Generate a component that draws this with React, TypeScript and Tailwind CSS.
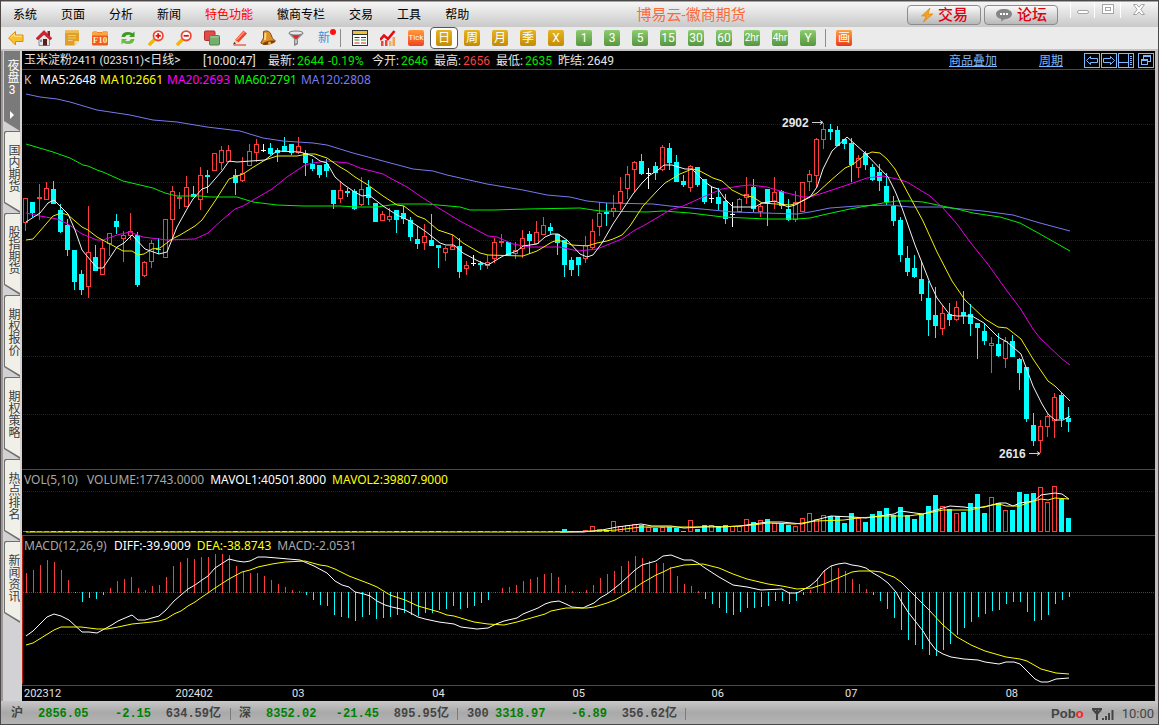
import type { ReactNode } from "react";
import clsx from "clsx";

const FIRST_X = 23;
const STEP = 7;

// kind (u = up, d = down, w = unchanged), high, body top, body bottom, low
const CANDLES = `
u 198 198 223 231|d 202 202 213 217|u 184 197 199 220|u 182 188 200 200|d 181 189 204 204
d 204 210 232 233|d 219 225 250 256|d 250 250 282 290|d 270 274 290 295|u 206 252 287 298
d 245 257 271 271|u 240 248 275 275|u 233 233 244 256|d 214 221 227 234|u 231 235 239 262
u 213 231 236 240|d 232 235 285 287|u 261 262 276 277|u 240 243 262 268|d 238 249 250 254
u 219 219 258 258|u 186 191 220 240|u 192 197 199 209|u 176 187 207 207|d 186 194 197 197
u 167 175 200 210|d 170 175 177 193|u 153 153 171 171|u 146 150 163 170|u 145 150 162 162
d 169 175 183 195|u 157 173 181 182|u 144 151 166 166|u 139 144 153 162|w 144 150 151 152
d 143 148 154 155|d 148 150 153 162|d 137 146 152 152|d 144 144 153 155|u 137 146 153 154
d 150 153 163 176|d 159 164 169 171|d 165 165 175 178|d 159 164 171 177|d 190 190 204 209
u 181 190 199 203|d 188 191 193 197|d 189 191 209 210|u 177 189 205 206|d 180 187 198 205
d 203 203 222 222|u 211 214 221 221|u 208 216 220 222|d 210 210 220 233|d 206 213 219 224
d 217 220 237 241|d 226 239 244 249|u 224 236 243 250|d 214 240 246 246|d 245 245 248 268
u 246 248 253 261|u 235 246 250 250|d 238 246 272 278|u 261 265 269 275|w 255 263 264 266
d 261 263 265 270|u 255 262 266 269|u 238 242 259 263|u 234 241 243 247|d 242 242 255 255
u 242 250 254 259|u 230 238 249 258|d 231 234 241 254|u 221 232 244 244|u 217 225 235 235
d 223 227 231 234|d 234 234 243 255|d 240 240 265 277|d 257 260 270 276|d 257 257 265 276
u 236 245 259 263|u 219 231 248 250|u 202 213 227 236|d 203 212 214 226|u 195 208 212 217
u 177 191 203 210|u 166 174 189 199|u 161 162 170 192|d 154 161 174 175|w 168 173 174 189
d 162 166 173 180|u 145 147 170 171|d 143 148 163 170|d 155 162 182 182|d 175 181 185 187
u 165 166 188 192|d 167 167 185 187|d 179 179 202 204|w 186 198 199 203|d 188 197 204 210
d 194 201 219 224|w 202 214 215 227|u 198 199 212 212|u 177 194 198 204|d 179 187 209 212
u 203 206 212 217|d 189 189 204 226|u 177 192 202 209|d 190 191 206 209|d 199 209 220 221
u 191 202 220 222|u 182 182 212 212|u 170 174 182 191|u 138 139 176 188|u 123 129 140 149
d 124 129 132 140|d 126 130 146 146|d 139 139 144 149|d 138 143 165 182|u 155 158 168 178
d 151 153 165 170|d 164 167 180 181|d 164 172 181 191|d 173 186 202 205|d 196 206 221 226
d 217 220 255 262|d 246 258 272 276|d 255 268 277 278|d 261 279 294 301|d 281 298 320 336
d 287 315 326 338|u 306 313 329 335|d 303 314 320 326|u 301 307 320 321|d 291 312 316 324
d 304 314 324 336|d 323 323 328 359|d 323 331 341 345|u 337 343 346 373|d 333 344 356 357
u 337 341 359 368|d 335 341 357 357|d 358 359 373 390|d 367 367 419 422|d 413 425 441 446
u 420 426 441 453|u 414 416 427 437|u 393 397 421 438|d 393 395 419 427|d 407 418 422 432`
  .trim()
  .split(/[|\n]/)
  .map((row) => {
    const [kind, ...v] = row.split(" ");
    const [high, top, bottom, low] = v.map(Number);
    return { kind, high, top, bottom, low };
  });

// bars before the contract became active are all one unit high
const VOLUMES = [
  ...Array(77).fill(1),
  3, 1, 1, 2, 6, 3, 2, 11, 6, 7, 8, 7, 5, 4, 5, 5, 4, 1, 12, 3, 7, 7, 6, 7, 6, 6, 13, 10, 12, 13, 9, 9, 7, 6, 14, 19,
  13, 17, 16, 16, 9, 19, 14, 10, 18, 21, 24, 17, 25, 17, 13, 18, 26, 37, 26, 23, 19, 20, 29, 38, 19, 35, 29, 22, 22,
  40, 38, 39, 45, 30, 46, 33, 14,
] as number[];

const MACD = [
  19, 22, 27, 32, 30, 22, 12, -1, -10, -6, -7, -3, 4, 11, 13, 15, 4, 2, 6, 7, 15, 26, 30, 34, 33, 35, 35, 38, 38, 37,
  26, 20, 19, 19, 16, 12, 8, 5, 2, 1, -3, -8, -13, -14, -23, -25, -26, -29, -25, -23, -27, -26, -25, -23, -21, -23, -24,
  -21, -21, -18, -17, -14, -17, -16, -14, -11, -8, 0, 4, 5, 7, 11, 13, 15, 18, 19, 15, 7, 1, -1, 2, 7, 14, 18, 21, 26,
  31, 36, 34, 31, 29, 29, 25, 16, 8, 6, 1, -7, -12, -16, -21, -23, -20, -16, -16, -15, -14, -9, -9, -12, -9, -3, 2, 14,
  22, 26, 24, 21, 13, 8, 3, -3, -9, -17, -26, -38, -48, -53, -57, -63, -64, -58, -52, -43, -36, -30, -25, -22, -19, -18,
  -12, -10, -10, -20, -29, -28, -23, -12, -8, -5,
];

const MA5 =
  "26,222 40,213 48,203 54,200 68,214 75,230 82,250 97,268 103,268 117,247 124,243 132,235 145,249 159,254 167,252 177,227 187,209 193,199 202,189 208,187 222,171 229,161 237,162 265,160 277,151 300,152 313,156 320,161 327,163 335,177 343,184 353,191 362,196 369,195 383,206 397,215 410,221 425,231 440,243 446,245 454,245 463,253 480,262 488,265 503,256 517,251 523,246 537,244 545,237 552,234 558,234 567,240 580,254 587,257 593,255 602,243 613,224 633,194 642,183 650,175 658,170 664,165 672,165 685,169 692,169 705,182 712,187 718,189 725,199 733,207 755,207 762,203 775,201 788,207 795,205 810,197 817,187 823,169 832,151 847,137 865,153 888,177 895,191 902,208 915,245 930,283 937,298 950,315 957,316 972,316 984,323 998,337 1007,342 1021,354 1033,386 1042,404 1048,414 1055,420 1063,420 1070,416";
const MA10 =
  "26,240 33,239 53,216 61,213 68,215 82,227 88,230 97,237 123,251 132,251 138,255 144,254 152,249 160,248 172,239 180,235 195,226 202,220 215,201 229,179 243,174 252,168 265,160 277,156 297,156 307,154 315,154 327,158 340,167 347,171 355,177 368,185 383,196 397,205 404,206 417,216 425,219 438,230 453,235 463,243 480,253 488,255 523,256 537,251 552,242 558,240 572,245 587,246 597,243 607,241 613,239 622,235 630,226 643,206 657,191 665,183 680,174 692,169 698,170 713,178 722,181 732,190 742,195 753,197 762,203 790,205 798,203 817,193 830,181 845,168 852,165 865,155 872,152 880,153 887,159 895,169 910,197 923,221 937,252 952,281 965,300 985,319 998,327 1007,328 1021,339 1033,359 1048,381 1055,386 1070,401";
const MA20 =
  "26,213 40,216 57,219 68,224 82,234 97,240 103,240 117,235 130,232 143,237 167,240 195,239 208,233 222,220 235,209 243,206 272,189 287,177 305,165 313,163 327,161 348,163 360,168 383,174 390,178 407,187 420,196 437,207 460,221 488,236 497,237 513,244 530,247 560,247 578,251 597,249 622,239 635,230 643,226 660,216 670,210 683,206 703,197 722,189 740,186 750,185 767,187 783,192 803,197 810,197 823,193 850,184 867,178 883,176 897,179 907,182 930,196 943,208 957,224 970,242 987,263 1007,291 1020,308 1033,329 1040,338 1062,359 1070,365";
const MA60 =
  "26,144 53,152 70,158 83,165 88,166 97,170 103,172 123,181 153,188 165,193 177,196 200,196 210,197 237,197 253,202 277,205 303,206 340,206 357,207 377,207 397,204 427,204 460,207 470,210 493,210 527,209 580,208 600,211 647,212 663,211 690,213 723,217 767,219 797,219 810,218 827,214 850,209 883,203 897,201 910,201 923,202 957,209 973,213 1000,217 1020,223 1040,234 1070,251";
const MA120 =
  "26,94 40,97 57,99 70,102 97,110 130,115 153,120 177,122 207,127 240,131 263,138 283,141 313,143 327,145 353,153 383,161 413,169 433,171 447,175 487,184 523,190 547,195 570,197 587,201 607,203 653,204 670,206 733,212 797,214 810,212 830,208 857,206 890,205 910,207 940,207 983,211 1013,215 1040,223 1070,231";

const MAVOL1 =
  "560,532 583,532 602,530 617,527 641,524 652,526 671,526 684,528 701,527 711,526 720,527 740,526 753,524 768,522 782,522 802,524 816,520 831,516 852,517 866,518 879,516 894,514 900,511 908,512 915,513 923,514 936,510 950,506 964,507 971,508 985,507 999,503 1006,503 1013,506 1020,503 1034,501 1041,495 1048,494 1055,493 1062,494 1069,499";
const MAVOL2 =
  "26,532 560,532 598,531 617,530 641,527 675,527 719,527 740,526 753,525 768,523 795,524 816,521 844,520 858,518 887,516 908,516 923,514 943,510 950,510 971,510 978,508 992,505 999,504 1006,506 1020,506 1027,503 1041,499 1048,500 1055,498 1069,499";

const DIFF =
  "26,636 33,631 47,617 54,614 61,616 69,620 82,632 89,632 97,633 110,626 118,621 132,615 138,620 145,620 152,618 159,616 166,610 174,601 188,589 195,585 202,580 208,576 215,568 229,559 237,561 244,562 250,561 258,557 265,557 277,558 300,560 314,566 327,573 335,581 342,585 349,587 355,592 364,594 370,596 377,601 385,605 392,607 405,610 418,617 425,619 439,622 454,624 461,627 477,629 488,628 496,624 504,621 517,618 523,614 538,608 545,604 551,602 559,601 566,604 572,607 583,608 587,606 594,603 600,598 607,594 615,588 621,583 635,570 642,565 656,561 663,556 671,555 684,560 692,560 698,563 705,568 719,577 733,585 747,587 761,590 782,589 789,593 797,593 810,586 817,580 824,571 831,566 838,564 845,563 852,565 859,566 866,568 873,573 880,577 888,583 896,592 901,601 908,612 923,631 929,641 936,650 943,654 951,657 964,659 978,660 985,662 992,663 999,664 1006,662 1014,662 1020,664 1027,671 1035,679 1041,682 1048,682 1056,679 1069,678";
const DEA =
  "26,645 33,643 54,630 61,627 69,627 81,627 97,629 107,629 118,627 132,624 152,622 159,621 166,619 174,614 181,611 188,606 195,602 202,597 208,593 215,588 229,579 242,572 250,570 258,567 272,564 285,562 305,561 320,565 327,566 335,569 349,576 370,584 377,587 390,595 405,600 418,606 439,612 447,615 454,616 474,622 488,624 504,625 517,622 545,614 551,611 566,608 587,608 594,607 607,603 615,600 629,592 642,583 656,575 663,572 671,568 684,565 703,564 719,568 733,574 747,579 768,584 782,586 797,589 812,588 824,584 845,575 852,572 859,571 873,571 881,572 888,575 894,577 901,582 913,594 929,610 943,625 957,637 971,645 985,651 1006,657 1020,659 1027,661 1041,669 1056,673 1069,674";

const MENU = ["系统", "页面", "分析", "新闻", "特色功能", "徽商专栏", "交易", "工具", "帮助"];
const SIDE_TABS = ["国内期货", "股指期货", "期权报价", "期权策略", "热点排名", "新闻资讯"];

const PERIODS = [
  { label: "Tick", tone: "orange" },
  { label: "日", tone: "amber", active: true },
  { label: "周", tone: "amber" },
  { label: "月", tone: "amber" },
  { label: "季", tone: "amber" },
  { label: "X", tone: "amber" },
  { label: "1", tone: "green" },
  { label: "3", tone: "green" },
  { label: "5", tone: "green" },
  { label: "15", tone: "green" },
  { label: "30", tone: "green" },
  { label: "60", tone: "green" },
  { label: "2hr", tone: "green" },
  { label: "4hr", tone: "green" },
  { label: "Y", tone: "green" },
];

const TONES: Record<string, string> = {
  orange: "from-[#ff9a3c] to-[#f04020]",
  amber: "from-[#e6b422] to-[#c48c00]",
  green: "from-[#8fcc70] to-[#55963f]",
};

/* ---------- toolbar icons ---------- */

function Icon({ children }: { children: ReactNode }) {
  return (
    <svg viewBox="0 0 16 16" className="size-4" aria-hidden="true">
      {children}
    </svg>
  );
}

function Magnifier({ plus }: { plus?: boolean }) {
  return (
    <Icon>
      <path d="M2 14 6.5 9.5" stroke="#f8b500" strokeWidth="3.6" strokeLinecap="round" />
      <circle cx="10.2" cy="5.8" r="4.7" fill="#fff" stroke="#ea4a34" strokeWidth="1.8" />
      <path d="M7.6 5.8h5.2" stroke="#e01010" strokeWidth="1.8" />
      {plus && <path d="M10.2 3.2v5.2" stroke="#e01010" strokeWidth="1.8" />}
    </Icon>
  );
}

const TOOLS: { name: string; icon: ReactNode }[] = [
  {
    name: "后退",
    icon: (
      <Icon>
        <path d="M.6 8 7.5 1.5V5H15v6.5H7.500V15z" fill="#fbc12d" stroke="#d98d0c" />
        <path d="M2.500 7.600 6.500 4v2.200H14" fill="none" stroke="#ffe68a" />
      </Icon>
    ),
  },
  {
    name: "首页",
    icon: (
      <Icon>
        <path d="M3 8v7.5h10.500V8L8 3.500z" fill="#e4e4e4" stroke="#777" strokeWidth=".8" />
        <path d="M11.500 1H14v5h-2.500z" fill="#8d2020" />
        <path d="M0 8.500 8 .5l8 8-2 1.200L8 4.500 2 9.700z" fill="#d81f2c" stroke="#9c1218" strokeWidth=".6" />
        <path d="M7 9h4v6.500H7z" fill="#5a1c1c" />
        <path d="M4 9.500h2v2.500H4z" fill="#7d93a8" />
      </Icon>
    ),
  },
  {
    name: "便签",
    icon: (
      <Icon>
        <path d="M1 .5h14v10.500l-4.500 4.500H1z" fill="#dfa02a" />
        <path d="M1 .5h14V3H1z" fill="#eebb4e" />
        <path d="M10.500 15.500V11H15z" fill="#f8dc90" />
        <path d="M4 5.500h8M4 8h8M4 10.500h4.500" stroke="#f1cb78" />
      </Icon>
    ),
  },
  {
    name: "F10",
    icon: (
      <Icon>
        <rect x="0" y="2" width="16" height="13.5" rx="1.5" fill="#ef5a1e" />
        <path d="M0 5.500V3.500Q0 1 2.500 1h2l1 1.500H10L11 1h3.500Q16 1 16 3v2.500z" fill="#fba741" />
        <text x="8" y="13" textAnchor="middle" fontSize="9" fontWeight="700" fill="#fff3c4" fontFamily="Liberation Serif, serif">
          F10
        </text>
      </Icon>
    ),
  },
  {
    name: "刷新",
    icon: (
      <Icon>
        <path d="M1.500 7Q2 2 8 2q2.500 0 4.500 1.300L14.500 1.500V7H9l1.800-1.800Q6.500 3.800 5 7z" fill="#3f9a24" />
        <path d="M14.500 9Q14 14 8 14q-2.500 0-4.500-1.300L1.500 14.500V9H7l-1.800 1.800Q9.500 12.200 11 9z" fill="#6cba44" />
      </Icon>
    ),
  },
  { name: "放大", icon: <Magnifier plus /> },
  { name: "缩小", icon: <Magnifier /> },
  {
    name: "叠加",
    icon: (
      <Icon>
        <rect x=".5" y="1" width="10.5" height="9.5" rx="1" fill="#e04a48" stroke="#b62c2c" />
        <rect x="5.5" y="5.5" width="10" height="9.5" rx="1" fill="#74ad6f" stroke="#4c8448" />
        <path d="M6.5 7h8" stroke="#a9d3a4" />
      </Icon>
    ),
  },
  {
    name: "画线",
    icon: (
      <Icon>
        <path d="m3 10 8.5-9.500 3.500 3L6.500 12.500z" fill="#f0442c" />
        <path d="m4.500 10 8-8.500" stroke="#ff9a80" strokeWidth="1.2" />
        <path d="m3 10 3.500 2.500L2 14z" fill="#f3cf95" />
        <path d="M1.500 15h12.500" stroke="#e0452c" strokeWidth="1.2" />
        <path d="m1.200 14.500 1-2.500 1.800 1.500z" fill="#3a2a20" />
      </Icon>
    ),
  },
  {
    name: "预警",
    icon: (
      <Icon>
        <path d="M3.500 1.500Q9-.5 11 4.500l1.500 4L15.500 11 4 14.500 .8 13 3.500 8z" fill="#dd9128" stroke="#8b4c10" />
        <path d="M5.500 3 5 10" stroke="#ffdf8d" strokeWidth="1.800" />
        <ellipse cx="9" cy="12.700" rx="6.300" ry="1.900" fill="#7c4312" transform="rotate(-12 9 12.700)" />
        <circle cx="9.500" cy="13" r="1.500" fill="#f3b840" />
      </Icon>
    ),
  },
  {
    name: "筛选",
    icon: (
      <Icon>
        <path d="M1 3.500 6.500 9v6.500l3-1.500V9L15 3.500z" fill="#9a9a9a" stroke="#6c6c6c" strokeWidth=".7" />
        <path d="M3.500 4.500h9L8 9.500z" fill="#e3202a" />
        <ellipse cx="8" cy="3" rx="7" ry="2" fill="#e8e8e8" stroke="#7b7b7b" />
        <path d="M8 9.500V13" stroke="#e8e8e8" />
      </Icon>
    ),
  },
];

function TableIcon() {
  return (
    <Icon>
      <rect x=".5" y=".5" width="15" height="15" fill="#fff" stroke="#333" />
      <path d="M1 1h14v3H1z" fill="#ecc238" />
      <path d="M1 4.5h14" stroke="#333" />
      <path d="M2.5 7.5h5M9 7.5h5" stroke="#333" />
      <path d="M2.5 10h5M9 10h5" stroke="#1c9a2c" />
      <path d="M2.5 13h5M9 13h5" stroke="#d6241d" />
    </Icon>
  );
}

function TrendIcon() {
  return (
    <Icon>
      <path d="M1 16v-5h2.500v5zM5 16v-6h2.500v6z" fill="#e34a3c" />
      <path d="M9 16v-5h2.500v5z" fill="#efb06b" />
      <path d="M12.500 16V7H15v9z" fill="#f0a34b" />
      <path d="m0 10 4-4.500 4 3.500L14.500 1" fill="none" stroke="#e30b10" strokeWidth="2.600" />
    </Icon>
  );
}

/* ---------- shared bits ---------- */

function Grid({ rows }: { rows: number[] }) {
  return (
    <g stroke="#6c0000" strokeDasharray="1 1" shapeRendering="crispEdges">
      {rows.map((y) => (
        <path key={y} d={`M23 ${y}.5H1155`} />
      ))}
    </g>
  );
}

function Line({ points, color }: { points: string; color: string }) {
  return <polyline points={points} fill="none" stroke={color} strokeWidth="1" />;
}

function Plot({ top, height, label, children }: { top: number; height: number; label: string; children: ReactNode }) {
  return (
    <svg
      viewBox={`22 ${top} 1133 ${height}`}
      preserveAspectRatio="none"
      className="block min-h-0 w-full flex-1 overflow-visible"
      role="img"
      aria-label={label}
    >
      {children}
    </svg>
  );
}

function Quote({ label, value, tone }: { label: string; value: string; tone: string }) {
  return (
    <span className="flex w-[62px]">
      <span className="w-[29px]">{label}:</span>
      <span className={tone}>{value}</span>
    </span>
  );
}

function FrameButton({ label, children }: { label: string; children: ReactNode }) {
  return (
    <button type="button" aria-label={label} className="h-[15px] w-4 border border-[#7ab8ff]">
      <svg viewBox="0 0 14 13" className="h-[13px] w-[14px]" fill="none" stroke="#7ab8ff" shapeRendering="crispEdges">
        {children}
      </svg>
    </button>
  );
}

/* ---------- page parts ---------- */

function TitleBar() {
  return (
    <header className="flex h-[26px] shrink-0 items-center border-t border-[#a8a4a4] bg-linear-to-b from-[#f6f6f6] to-[#c9c9c9] pl-3">
      <nav className="flex gap-6 pt-px text-xs text-black">
        {MENU.map((item) => (
          <button key={item} type="button" className={clsx(item === "特色功能" && "text-[#ff0000]")}>
            {item}
          </button>
        ))}
      </nav>
      <h1 className="flex-1 pl-1.5 text-center text-[15px] leading-5 text-[#fb6b3a]">博易云-徽商期货</h1>
      <div className="flex gap-[3px]">
        <button
          type="button"
          className="flex h-5 w-[74px] items-center justify-center gap-1 rounded border border-[#8c8c8c] bg-linear-to-b from-[#fafafa] to-[#b9b9b9] text-[15px] leading-4 font-medium text-[#e00010]"
        >
          <svg viewBox="0 0 14 16" className="h-4 w-3.5" aria-hidden="true">
            <path d="M10 1 1.5 9H6l-2.5 6L13 7H8z" fill="#f7a21b" stroke="#d97d0a" strokeWidth=".6" />
          </svg>
          交易
        </button>
        <button
          type="button"
          className="flex h-5 w-[74px] items-center justify-center gap-1 rounded border border-[#8c8c8c] bg-linear-to-b from-[#fafafa] to-[#b9b9b9] text-[15px] leading-4 font-medium text-[#e00010]"
        >
          <svg viewBox="0 0 18 14" className="h-3.5 w-[18px]" aria-hidden="true">
            <path d="M9 1c4.500 0 8 2 8 5s-3.500 5.200-7.500 5.200L6 13.500l.3-2.600C3 10.300 1 8.500 1 6c0-3 3.500-5 8-5z" fill="#858585" />
            <path d="M5 6h2M8 6h2M11 6h2" stroke="#fff" strokeWidth="2" />
          </svg>
          论坛
        </button>
      </div>
      <div className="ml-3 flex h-full w-[88px] items-start">
        <button type="button" aria-label="最小化" className="flex h-4 w-6 justify-center border-l border-white pt-2">
          <span className="h-1 w-3 rounded-xs border border-[#a4a4a4] bg-white" />
        </button>
        <button type="button" aria-label="最大化" className="flex h-4 w-[26px] justify-center border-l border-white pt-0.5">
          <span className="flex h-[10px] w-3 items-center justify-center border border-[#a4a4a4] bg-white">
            <span className="h-1 w-1.5 border border-[#a4a4a4]" />
          </span>
        </button>
        <button type="button" aria-label="关闭" className="flex h-4 w-9 justify-center border-l border-white pt-0.5">
          <svg viewBox="0 0 12 11" className="h-[11px] w-3">
            <path
              d="M.5.5h3.200L6 3.200 8.300.5h3.200L7.800 5.500l3.700 5H8.300L6 7.800l-2.300 2.700H.5l3.700-5z"
              fill="#fff"
              stroke="#a4a4a4"
            />
          </svg>
        </button>
      </div>
    </header>
  );
}

function Toolbar() {
  return (
    <div role="toolbar" className="flex h-6 shrink-0 items-center border-b-2 border-[#c8c4c4] bg-[#ebebeb] pl-px">
      {TOOLS.map((tool) => (
        <button key={tool.name} type="button" aria-label={tool.name} className="flex h-[22px] w-7 items-center justify-center">
          {tool.icon}
        </button>
      ))}
      <button type="button" className="relative flex h-[22px] w-7 items-center justify-center text-xs text-[#3c8fe0]">
        新
        <span className="absolute top-0.5 right-0.5 size-1.5 rounded-full bg-[#ff1010]" />
      </button>
      <span className="mr-[5px] ml-0.5 h-[18px] w-px bg-[#8c8c8c]" />
      <button type="button" aria-label="报价" className="flex h-[22px] w-7 items-center justify-center">
        <TableIcon />
      </button>
      <button type="button" aria-label="走势" className="flex h-[22px] w-7 items-center justify-center">
        <TrendIcon />
      </button>
      {PERIODS.map((p) => (
        <button
          key={p.label}
          type="button"
          aria-pressed={!!p.active}
          className={clsx(
            "flex h-[22px] w-7 items-center justify-center",
            p.active && "rounded border border-[#555] bg-white"
          )}
        >
          <span
            className={clsx(
              "flex size-4 items-center justify-center rounded-xs bg-linear-to-b leading-4 whitespace-nowrap text-white",
              TONES[p.tone],
              p.label.length > 3 ? "text-[8px]" : p.label.length > 2 ? "text-[10px]" : "text-xs"
            )}
          >
            {p.label}
          </span>
        </button>
      ))}
      <span className="mr-1 ml-[3px] h-[18px] w-px bg-[#8c8c8c]" />
      <button type="button" aria-label="画面" className="flex h-[22px] w-7 items-center justify-center">
        <span className="flex size-4 items-center justify-center rounded-xs bg-linear-to-b from-[#ffa03c] to-[#ea3318] text-xs leading-4 text-white">
          画
        </span>
      </button>
    </div>
  );
}

function SideBar() {
  return (
    <aside className="flex w-[21px] shrink-0 flex-col border-r-2 border-l-2 border-r-[#d6d2d2] border-l-[#9c9898] bg-[#d2d2d4] pl-px text-xs leading-4">
      <button
        type="button"
        className="flex h-20 w-4 flex-col items-center justify-between bg-[#7a7a7a] pt-2 pb-3 text-white [clip-path:polygon(0_0,100%_0,100%_100%,0_70px)]"
      >
        <span className="[writing-mode:vertical-rl] [text-orientation:upright]">夜盘3</span>
        <svg viewBox="0 0 4 8" className="h-2 w-1">
          <path d="M0 0 4 4 0 8z" fill="#fff" />
        </svg>
      </button>
      {SIDE_TABS.map((tab) => (
        <button
          key={tab}
          type="button"
          className="h-[82px] w-4 rounded-tl-xs bg-[#6e6e6e] pt-px pl-px text-[#3c3c3c] [clip-path:polygon(0_0,100%_0,100%_100%,0_72px)]"
        >
          <span className="flex h-[81px] w-[15px] items-start rounded-tl-xs bg-[#f1f0e8] pt-3 [clip-path:polygon(0_0,100%_0,100%_79px,0_70px)]">
            <span className="w-[15px] leading-[15px] [writing-mode:vertical-rl] [text-orientation:upright]">{tab}</span>
          </span>
        </button>
      ))}
    </aside>
  );
}

function QuoteHeader() {
  return (
    <div className="flex h-[19px] shrink-0 items-center border-b border-[#b81c0c] pt-px pl-0.5 text-xs leading-4 text-[#e4e4e4]">
      <span className="w-[179px]">
        玉米淀粉<span className="text-[11px]">2411 (023511)</span>&lt;日线&gt;
      </span>
      <span className="w-[65px]">[10:00:47]</span>
      <span className="flex w-[104px]">
        <span className="w-[29px]">最新:</span>
        <span className="w-[31px] text-[#00e800]">2644</span>
        <span className="text-[#00e800]">-0.19%</span>
      </span>
      <Quote label="今开" value="2646" tone="text-[#00e800]" />
      <Quote label="最高" value="2656" tone="text-[#ff4040]" />
      <Quote label="最低" value="2635" tone="text-[#00e800]" />
      <Quote label="昨结" value="2649" tone="" />
      <div className="ml-auto flex items-center pr-px">
        <a href="#overlay" className="mr-[42px] text-[#7ab8ff] underline">
          商品叠加
        </a>
        <a href="#period" className="mr-[21px] text-[#7ab8ff] underline">
          周期
        </a>
        <div className="flex gap-px">
          <FrameButton label="上一个">
            <path d="M1.5 6.5 5.500 2.500V4.500H12.500V8.500H5.500V10.500z" shapeRendering="auto" />
          </FrameButton>
          <FrameButton label="下一个">
            <path d="M12.5 6.5 8.500 2.500V4.500H1.500V8.500H8.500V10.500z" shapeRendering="auto" />
          </FrameButton>
          <FrameButton label="分栏">
            <path d="M0 8.500H9M9.500 0V13M11 2.500h2M11 4.500h2M11 6.500h2M11 8.500h2M11 10.500h2" />
          </FrameButton>
        </div>
        <div className="ml-1 flex">
          <FrameButton label="还原">
            <path d="M4.500 5V1.500H11.500V7.500H9M4 2.500H12M2.500 5.500H8.500V10.500H2.500zM2 6.500H9" />
          </FrameButton>
        </div>
      </div>
    </div>
  );
}

function CandlePanel() {
  return (
    <section className="flex min-h-0 flex-1 flex-col border-b border-[#b81c0c]">
      <div className="flex h-5 shrink-0 items-center gap-1 pl-0.5 font-['Noto_Sans',sans-serif] text-xs text-[#c0c0c0]">
        <span className="w-3">K</span>
        <span className="text-white">MA5:2648</span>
        <span className="text-[#ffff00]">MA10:2661</span>
        <span className="text-[#ff00ff]">MA20:2693</span>
        <span className="text-[#00ff00]">MA60:2791</span>
        <span className="text-[#7a7af0]">MA120:2808</span>
      </div>
      <Plot top={90} height={379} label="日K线">
        <Grid rows={[124, 182, 240, 298, 356, 414]} />
        <g shapeRendering="crispEdges">
          {CANDLES.map((c, i) => {
            const x = FIRST_X + i * STEP;
            const mid = x + 2.5;
            if (c.kind === "w") {
              return <path key={i} d={`M${mid} ${c.high}V${c.low}M${x} ${c.top + 0.5}h5`} stroke="#fff" />;
            }
            if (c.kind === "d") {
              return (
                <g key={i}>
                  <path d={`M${mid} ${c.high}V${c.low}`} stroke="#00ffff" />
                  <rect x={x} y={c.top} width="5" height={c.bottom - c.top} fill="#00ffff" />
                </g>
              );
            }
            return (
              <path
                key={i}
                d={`M${mid} ${c.high}V${c.top}M${mid} ${c.bottom}V${c.low}M${x + 0.5} ${c.top + 0.5}h4V${c.bottom - 0.5}h-4z`}
                fill="none"
                stroke="#ff3c3c"
              />
            );
          })}
        </g>
        <Line points={MA120} color="#7878f0" />
        <Line points={MA60} color="#00f000" />
        <Line points={MA20} color="#e800e8" />
        <Line points={MA10} color="#f0f000" />
        <Line points={MA5} color="#f4f4f4" />
        <g fill="#e6e6e6" fontSize="12" fontWeight="700" fontFamily="Liberation Sans, sans-serif">
          <text x="782" y="127">
            2902
          </text>
          <text x="999" y="458">
            2616
          </text>
        </g>
        <path d="M812 122.5h11M820 120.5l3 2-3 2M1029 453.5h11M1037 451.5l3 2-3 2" fill="none" stroke="#d0d0d0" />
      </Plot>
    </section>
  );
}

function VolumePanel() {
  return (
    <section className="flex h-[66px] shrink-0 flex-col border-b border-[#b81c0c]">
      <div className="flex h-5 shrink-0 items-center gap-1.5 pl-0.5 font-['Noto_Sans',sans-serif] text-xs text-[#a8a8a8]">
        <span className="w-[57px]">VOL(5,10)</span>
        <span>VOLUME:17743.0000</span>
        <span className="text-white">MAVOL1:40501.8000</span>
        <span className="text-[#ffff00]">MAVOL2:39807.9000</span>
      </div>
      <Plot top={490} height={45} label="成交量">
        <Grid rows={[491]} />
        <g shapeRendering="crispEdges">
          {VOLUMES.map((v, i) => {
            const x = FIRST_X + i * STEP;
            const up = CANDLES[i].kind !== "d";
            return up && v > 1 ? (
              <rect key={i} x={x + 0.5} y={532.5 - v} width="4" height={v - 1} fill="none" stroke="#ff3c3c" />
            ) : (
              <rect key={i} x={x} y={532 - v} width="5" height={v} fill={up ? "#ff3c3c" : "#00ffff"} />
            );
          })}
        </g>
        <Line points={MAVOL1} color="#fff" />
        <Line points={MAVOL2} color="#ffff00" />
      </Plot>
    </section>
  );
}

function MacdPanel() {
  return (
    <section className="flex h-[150px] shrink-0 flex-col border-b border-[#b81c0c]">
      <div className="flex h-[18px] shrink-0 items-center gap-1.5 border-l border-[#b81c0c] pt-px pl-px font-['Noto_Sans',sans-serif] text-xs text-[#a8a8a8]">
        <span className="w-[84px]">MACD(12,26,9)</span>
        <span className="text-white">DIFF:-39.9009</span>
        <span className="text-[#ffff00]">DEA:-38.8743</span>
        <span>MACD:-2.0531</span>
      </div>
      <Plot top={554} height={131} label="MACD">
        <Grid rows={[634]} />
        <path d="M22.5 554V684" stroke="#b81c0c" shapeRendering="crispEdges" />
        <path d="M23 592.5H1155" stroke="#c01414" strokeDasharray="1 1" shapeRendering="crispEdges" />
        <g shapeRendering="crispEdges">
          {MACD.map((v, i) => (
            <path
              key={i}
              d={`M${FIRST_X + 3.5 + i * STEP} ${v < 0 ? 592 : 593}V${592 - v}`}
              stroke={v < 0 ? "#00ffff" : "#ff3c3c"}
            />
          ))}
        </g>
        <Line points={DIFF} color="#fff" />
        <Line points={DEA} color="#ffff00" />
      </Plot>
    </section>
  );
}

function DateAxis() {
  return (
    <div className="flex h-[15px] shrink-0 pl-0.5 font-['Roboto',sans-serif] text-[11px] leading-[15px] text-[#e4e4e4]">
      <span className="w-[13.4%]">202312</span>
      <span className="w-[10.3%]">202402</span>
      <span className="w-[12.4%]">03</span>
      <span className="w-[12.4%]">04</span>
      <span className="w-[12.3%]">05</span>
      <span className="w-[11.8%]">06</span>
      <span className="w-[14.2%]">07</span>
      <span>08</span>
    </div>
  );
}

function StatusBar() {
  return (
    <footer className="flex h-[23px] shrink-0 items-center bg-linear-to-b from-[#c8c8c8] via-[#a9a9a9] to-[#b4b4b4] pt-0.5 pl-2.5 font-['Liberation_Mono','Noto_Sans_CJK_SC',monospace] text-xs leading-4 font-bold whitespace-nowrap text-[#444]">
      <span className="w-[27px]">沪</span>
      <span className="w-[50px] text-[#008000]">2856.05</span>
      <span className="w-[63px] text-right text-[#008000]">-2.15</span>
      <span className="w-[70px] text-right">634.59亿</span>
      <span className="mr-2 ml-[9px] h-3 w-px bg-[#7c7c7c]" />
      <span className="w-[27px]">深</span>
      <span className="w-[50px] text-[#008000]">8352.02</span>
      <span className="w-[63px] text-right text-[#008000]">-21.45</span>
      <span className="w-[70px] text-right">895.95亿</span>
      <span className="mr-[9px] ml-2 h-3 w-px bg-[#7c7c7c]" />
      <span className="w-7">300</span>
      <span className="w-[50px] text-[#008000]">3318.97</span>
      <span className="w-[62px] text-right text-[#008000]">-6.89</span>
      <span className="w-[70px] text-right">356.62亿</span>
      <span className="ml-2 h-3 w-px bg-[#7c7c7c]" />
      <span className="ml-auto font-['Liberation_Sans',sans-serif] text-[13px]">
        Pob<span className="text-[#ff2020]">o</span>
      </span>
      <svg viewBox="0 0 22 14" className="mx-2 h-3.5 w-[22px]" fill="none" stroke="#444" aria-label="信号">
        <path d="M0 2h10M1 2.500 5 7l4-4.500M5 2v11" strokeWidth="2" />
        <path d="M11 11v2M14 9v4M17 6v7M20.500 3v10" strokeWidth="2" />
      </svg>
      <span className="pr-1 font-['Roboto',sans-serif] text-[13px] font-normal">10:00</span>
    </footer>
  );
}

export default function App() {
  return (
    <div className="flex h-screen w-full flex-col overflow-hidden border border-[#4c4848] bg-[#d2d2d4] font-['Roboto','Noto_Sans_CJK_SC',sans-serif]">
      <TitleBar />
      <Toolbar />
      <div className="flex min-h-0 flex-1">
        <SideBar />
        <main className="flex min-w-0 flex-1 flex-col bg-black">
          <QuoteHeader />
          <CandlePanel />
          <VolumePanel />
          <MacdPanel />
          <DateAxis />
        </main>
        <div className="w-[3px] shrink-0 bg-[#c8c0c0]" />
      </div>
      <StatusBar />
    </div>
  );
}
